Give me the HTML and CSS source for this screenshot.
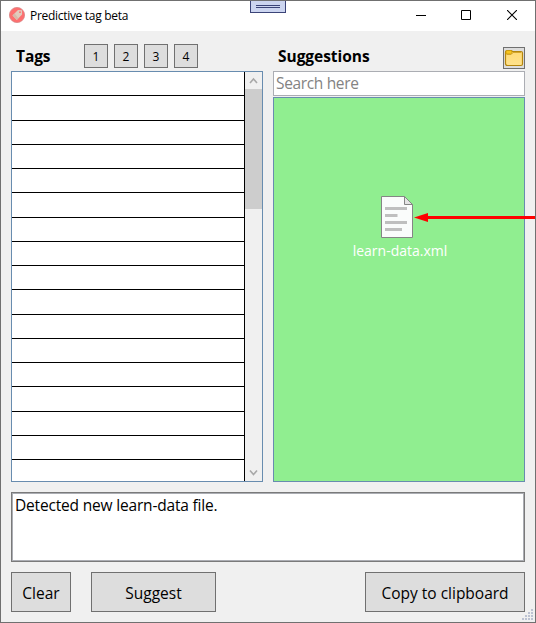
FILE: index.html
```html
<!DOCTYPE html>
<html lang="en">
<head>
<meta charset="utf-8">
<title>Predictive tag beta</title>
<link rel="stylesheet" href="styles.css">
</head>
<body>
<div class="window">
  <header class="titlebar">
    <svg class="logo" width="16" height="16" viewBox="0 0 16 16"><circle cx="8" cy="8" r="7.6" fill="#fd6f6f" stroke="#d98585" stroke-width=".8"/><path d="M3.5 8.5 9 3l4 .3.1 4.1-5.3 5.5z" fill="#e1cbbd"/><path d="M3.5 8.5 7.8 12.9l1.6-1.6-3.8-4.8z" fill="#d7b9aa"/><circle cx="11" cy="5.2" r=".9" fill="#fd6f6f"/></svg>
    <span class="title">Predictive tag beta</span>
    <div class="controls">
      <svg width="10" height="10"><path d="M0 5.5h10" stroke="#000"/></svg>
      <svg width="10" height="10"><path d="M.5.5h9v9h-9z" fill="none" stroke="#000"/></svg>
      <svg width="10" height="10"><path d="M0 0l10 10M10 0L0 10" stroke="#000" stroke-width="1.1"/></svg>
    </div>
  </header>
  <div class="grip-tab"><i></i><i></i></div>
  <main class="content">
    <div class="columns">
      <section class="tags">
        <div class="heading"><h2 class="tags-label">Tags</h2>
          <div class="numbers"><button>1</button><button>2</button><button>3</button><button>4</button></div>
        </div>
        <div class="list">
          <div class="rows"><div></div><div></div><div></div><div></div><div></div><div></div><div></div><div></div><div></div><div></div><div></div><div></div><div></div><div></div><div></div><div></div><div></div></div>
          <div class="scrollbar">
            <svg width="17" height="17"><path d="M5 11l3.5-4 3.5 4" fill="none" stroke="#a8a8a8" stroke-width="1.6"/></svg>
            <div class="thumb"></div>
            <svg class="down" width="17" height="17"><path d="M5 6.500l3.500 4 3.500-4" fill="none" stroke="#a8a8a8" stroke-width="1.600"/></svg>
          </div>
        </div>
      </section>
      <section class="suggestions">
        <div class="heading"><h2 class="sug-label">Suggestions</h2>
          <button class="folder"><svg width="20" height="20"><defs><linearGradient id="f" x2="0" y2="1"><stop stop-color="#ffda77"/><stop offset="1" stop-color="#ffe28c"/></linearGradient></defs><path d="M1.500 4.500q0-2 2-2h3q1.500 0 2 1h8.500q1.500 0 1.500 1.500v11q0 1.500-1.500 1.500H3.500q-2 0-2-2z" fill="url(#f)" stroke="#b5860d" stroke-width="1.200"/><path d="M2 3.500q0-1 1.500-1h3q1.500 0 1.500 1.500v1q0 1-1.500 1H2z" fill="#f7c51e" stroke="#c9980f" stroke-width=".8"/><path d="M3 6.500h4l2-2h8" fill="none" stroke="#d3a52c"/></svg></button>
        </div>
        <div class="search"><span>Search here</span></div>
        <div class="drop">
          <svg width="32" height="42" viewBox="0 0 32 42"><path d="M.5.500h23l8 8v33H.5z" fill="#fafcfb" stroke="#858585"/><path d="M23.500.500v8h8z" fill="#e4e4e4" stroke="#858585"/><path d="M4 12.500h22M4 19.500h12.500M4 26.500h22M4 33.500h17" stroke="#bfbfbf" stroke-width="3"/></svg>
          <span>learn-data.xml</span>
        </div>
      </section>
    </div>
    <div class="log"><span>Detected new learn-data file.</span></div>
    <footer class="actions">
      <button class="clear">Clear</button>
      <button class="suggest">Suggest</button>
      <button class="copy">Copy to clipboard</button>
    </footer>
  </main>
  <svg class="arrow" width="121" height="11"><path d="M13 5.500h108" stroke="#f00" stroke-width="3"/><path d="M0 5.500L14 1v9z" fill="#f00"/></svg>
  <svg class="resize" width="12" height="12"><path d="M9 1h2M6 4h2m1 0h2M3 7h2m1 0h2m1 0h2M0 10h2m1 0h2m1 0h2m1 0h2" stroke="#bcc2d2" stroke-width="2"/></svg>
</div>
</body>
</html>
```
FILE: styles.css
```css
* { box-sizing: border-box; }
body { margin: 0; font-family: "Open Sans", "Noto Sans", sans-serif; color: #000; }
svg { display: block; flex: none; }
.window { position: relative; width: 536px; height: 623px; border: 1px solid #707070; background: #f0f0f0; overflow: hidden; }
.titlebar { height: 30px; background: #fff; display: flex; align-items: center; padding: 0 18px 0 8px; }
.logo { margin-top: -2px; }
.title { margin-left: 5px; font-size: 12px; line-height: 16px; letter-spacing: -0.3px; }
.controls { margin-left: auto; margin-top: -2px; display: flex; gap: 36px; }
.controls svg:first-child { margin-right: -1px; }
.grip-tab { position: absolute; left: 249px; top: -2px; width: 36px; height: 14px; border: 1px solid #3b4478; background: #ccd5f0; display: flex; flex-direction: column; gap: 1px; padding: 5px 5px 4px; }
.grip-tab i { height: 1px; flex: none; background: #3b4478; }
.content { padding: 10px; }
.columns { display: flex; gap: 10px; height: 441px; }
section { width: 252px; display: flex; flex-direction: column; }
.heading { height: 30px; flex: none; display: flex; }
h2 { margin: 5px 0 0; font-size: 15.5px; line-height: 20px; font-weight: 700; padding-left: 5px; }
.tags-label { width: 73px; letter-spacing: -0.1px; }
.sug-label { letter-spacing: -0.04px; }
button { padding: 0; border: 1px solid #707070; background: #ddd; font: inherit; color: #000; }
.numbers { display: flex; gap: 6px; margin-top: 3px; }
.numbers button { width: 24px; height: 24px; font-size: 12px; line-height: 22px; padding-top: 1px; }
.folder { margin: 6px 0 0 auto; width: 22px; height: 22px; }
.list { flex: 1; border: 1px solid #688caf; background: #fff; display: flex; overflow: hidden; }
.rows { flex: 1; border-right: 1px solid #000; }
.rows div { height: 24.27px; border-bottom: 1px solid #000; }
.scrollbar { width: 17px; background: #f0f0f0; display: flex; flex-direction: column; }
.thumb { height: 120px; background: #cdcdcd; }
.down { margin-top: auto; }
.search { height: 25px; border: 1px solid #abadb3; background: #fff; color: #838383; font-size: 15.5px; line-height: 23px; padding-left: 2px; }
.search span { letter-spacing: -0.35px; }
.drop { flex: 1; margin-top: 1px; border: 1px solid #688caf; background: #90ee90; display: flex; flex-direction: column; align-items: center; padding-top: 98px; color: #fff; }
.drop svg { margin-right: 4px; }
.drop span { margin-top: 3px; margin-left: 2px; font-size: 14px; line-height: 20px; }
.log { margin-top: 10px; height: 70px; border: 1px solid #7a7a7a; box-shadow: inset 0 0 0 1px #abadb3; background: #fff; padding: 2px 3px; font-size: 15.5px; line-height: 21px; }
.log span { letter-spacing: -0.18px; }
.actions { margin-top: 10px; display: flex; height: 40px; font-size: 15.5px; }
.actions button { padding-top: 2px; }
.clear { width: 60px; }
.suggest { width: 125px; margin-left: 20px; }
.copy { width: 160px; margin-left: auto; }
.arrow { position: absolute; left: 413px; top: 211px; }
.resize { position: absolute; right: 1px; bottom: 1px; }
```
